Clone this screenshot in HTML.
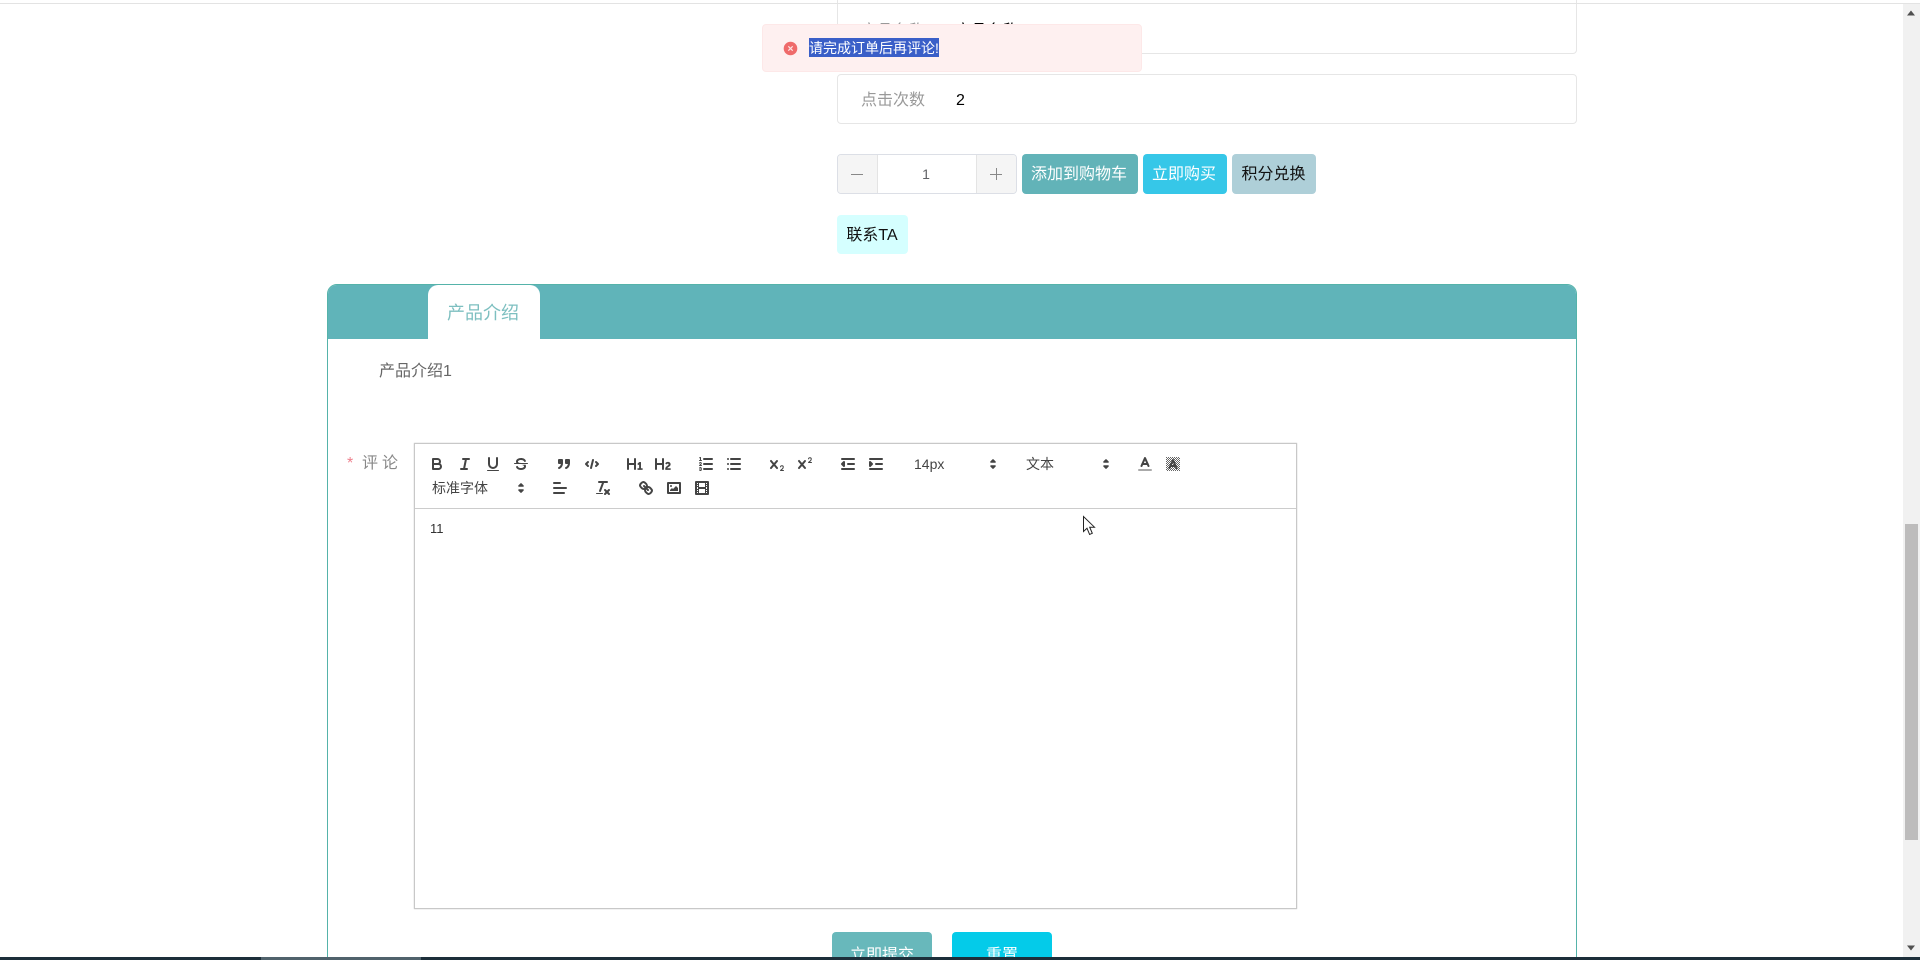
<!DOCTYPE html>
<html lang="zh">
<head>
<meta charset="utf-8">
<title>产品详情</title>
<style>
html,body{margin:0;padding:0;width:1920px;height:960px;overflow:hidden;background:#fff;font-family:"Liberation Sans","Noto Sans CJK SC",sans-serif;}
#w{position:absolute;left:0;top:0;width:1920px;height:960px;overflow:hidden;background:#fff;}
.a{position:absolute;box-sizing:border-box;white-space:nowrap;}
.c{display:flex;align-items:center;justify-content:center;}
svg.i{position:absolute;width:18px;height:18px;fill:none;stroke:#444;stroke-width:2;stroke-linecap:round;stroke-linejoin:round;overflow:visible;}
svg.i .f{fill:#444;stroke:none;}
svg.i .t{stroke-width:1;}
svg.i .b{fill:#444;}
</style>
</head>
<body>
<div id="w">
<!-- top line -->
<div class="a" style="left:0;top:3px;width:1920px;height:1px;background:#e3e3e3;z-index:3"></div>

<!-- description rows -->
<div class="a" style="left:837px;top:-10px;width:740px;height:64px;border:1px solid #e6e6e6;border-radius:4px;"></div>
<div class="a" style="left:861px;top:20px;font-size:16px;line-height:24px;color:#999;">商品名称</div>
<div class="a" style="left:955px;top:20px;font-size:16px;line-height:24px;color:#000;">商品名称1</div>
<div class="a" style="left:837px;top:74px;width:740px;height:50px;border:1px solid #e6e6e6;border-radius:4px;"></div>
<div class="a" style="left:861px;top:89px;font-size:16px;line-height:24px;color:#999;">点击次数</div>
<div class="a" style="left:956px;top:89px;font-size:16px;line-height:24px;color:#000;">2</div>

<!-- message -->
<div class="a" style="left:762px;top:24px;width:380px;height:48px;background:#fef0f0;border:1px solid #fde8e8;border-radius:4px;z-index:5;"></div>
<svg class="a" style="left:783px;top:41px;width:15px;height:15px;z-index:6" viewBox="0 0 15 15"><circle cx="7.5" cy="7.5" r="6.8" fill="#ef6b6b"/><path d="M5.3 5.3l4.4 4.4M9.7 5.3l-4.4 4.4" stroke="#fde2e2" stroke-width="1.2" fill="none"/></svg>
<div class="a" style="left:809px;top:38px;width:130px;height:19px;background:#3a5fc8;color:#fff;font-size:14px;line-height:20px;z-index:6;">请完成订单后再评论!</div>

<!-- stepper -->
<div class="a" style="left:837px;top:154px;width:180px;height:40px;border:1px solid #dcdfe6;border-radius:4px;background:#fff;overflow:hidden;">
  <div class="a" style="left:0;top:0;width:40px;height:38px;background:#f5f5f5;border-right:1px solid #e4e4e4;"></div>
  <div class="a" style="left:138px;top:0;width:40px;height:38px;background:#f5f5f5;border-left:1px solid #e4e4e4;"></div>
  <svg class="a" style="left:13px;top:13px;width:12px;height:12px" viewBox="0 0 12 12"><path d="M0 6.5H12" stroke="#888" stroke-width="1"/></svg>
  <svg class="a" style="left:152px;top:13px;width:12px;height:12px" viewBox="0 0 12 12"><path d="M0 6.5H12M6.5 0V12" stroke="#888" stroke-width="1"/></svg>
  <div class="a c" style="left:39px;top:0;width:98px;height:38px;color:#606266;font-size:14px;">1</div>
</div>
<div class="a c" style="left:1022px;top:154px;width:116px;height:40px;background:#62b3b8;color:#fff;font-size:16px;border-radius:4px;padding:0 2px 4px 0;">添加到购物车</div>
<div class="a c" style="left:1143px;top:154px;width:84px;height:40px;background:#36c7e8;color:#fff;font-size:16px;border-radius:4px;padding:0 2px 4px 0;">立即购买</div>
<div class="a c" style="left:1232px;top:154px;width:84px;height:40px;background:#aecfd8;color:#111;font-size:16px;border-radius:4px;padding:0 1px 4px 0;">积分兑换</div>
<div class="a c" style="left:837px;top:215px;width:71px;height:39px;background:#d5ffff;color:#111;font-size:16px;border-radius:4px;padding:0 1px 4px 0;">联系TA</div>

<!-- tab panel -->
<div class="a" style="left:327px;top:284px;width:1250px;height:700px;border:1px solid #55b3aa;border-radius:10px 10px 0 0;overflow:hidden;">
  <div class="a" style="left:0;top:0;width:1248px;height:54px;background:#60b4b9;"></div>
</div>
<div class="a c" style="left:428px;top:285px;width:112px;height:54px;background:#fff;border-radius:10px 10px 0 0;color:#7dbfc0;font-size:18px;padding-right:2px;">产品介绍</div>
<div class="a" style="left:379px;top:360px;font-size:16px;line-height:24px;color:#666;">产品介绍1</div>

<!-- form label -->
<div class="a" style="left:347px;top:452px;font-size:16px;line-height:24px;color:#ee7f8c;">*</div>
<div class="a" style="left:362px;top:452px;font-size:16px;line-height:24px;color:#888;letter-spacing:4px;">评论</div>

<!-- editor -->
<div class="a" style="left:414px;top:443px;width:883px;height:466px;border:1px solid #c8c8c8;box-shadow:0 0 1px #bbb;"></div>
<div class="a" style="left:415px;top:508px;width:881px;height:1px;background:#ccc;"></div>
<div class="a" style="left:430px;top:520px;font-size:13px;line-height:18px;color:#333;">11</div>

<!-- toolbar row 1 -->
<svg class="i" style="left:428px;top:455px" viewBox="0 0 18 18"><path d="M5,4H9.5A2.5,2.5,0,0,1,12,6.5v0A2.5,2.5,0,0,1,9.5,9H5A0,0,0,0,1,5,9V4A0,0,0,0,1,5,4Z"/><path d="M5,9h5.5A2.5,2.5,0,0,1,13,11.5v0A2.5,2.5,0,0,1,10.5,14H5a0,0,0,0,1,0,0V9A0,0,0,0,1,5,9Z"/></svg>
<svg class="i" style="left:456px;top:455px" viewBox="0 0 18 18"><line x1="7" x2="13" y1="4" y2="4"/><line x1="5" x2="11" y1="14" y2="14"/><line x1="8" x2="10" y1="14" y2="4"/></svg>
<svg class="i" style="left:484px;top:455px" viewBox="0 0 18 18"><path d="M5,3V9a4.012,4.012,0,0,0,4,4H9a4.012,4.012,0,0,0,4-4V3"/><rect class="f" height="1" rx="0.5" ry="0.5" width="12" x="3" y="15"/></svg>
<svg class="i" style="left:512px;top:455px" viewBox="0 0 18 18"><line class="t" x1="15.5" x2="2.5" y1="8.5" y2="8.5"/><path class="f" d="M9.007,8C6.542,7.791,6,7.519,6,6.5,6,5.792,7.283,5,9,5c1.571,0,2.765.679,2.969,1.309a1,1,0,0,0,1.9-.617C13.356,4.106,11.354,3,9,3,6.2,3,4,4.538,4,6.5a3.2,3.2,0,0,0,.5,1.843Z"/><path class="f" d="M8.984,10C11.457,10.208,12,10.479,12,11.5c0,.708-1.283,1.5-3,1.5-1.571,0-2.765-.679-2.969-1.309a1,1,0,1,0-1.9.617C4.644,13.894,6.646,15,9,15c2.8,0,5-1.538,5-3.5a3.2,3.2,0,0,0-.5-1.843Z"/></svg>
<svg class="i" style="left:555px;top:455px" viewBox="0 0 18 18"><rect class="b" height="3" width="3" x="4" y="5"/><rect class="b" height="3" width="3" x="11" y="5"/><path class="b" d="M7,8c0,4.031-3,5-3,5"/><path class="b" d="M14,8c0,4.031-3,5-3,5"/></svg>
<svg class="i" style="left:583px;top:455px" viewBox="0 0 18 18"><polyline points="5 7 3 9 5 11"/><polyline points="13 7 15 9 13 11"/><line x1="10" x2="8" y1="5" y2="13"/></svg>
<svg class="i" style="left:626px;top:455px" viewBox="0 0 18 18"><path class="f" d="M10,4V14a1,1,0,0,1-2,0V10H3v4a1,1,0,0,1-2,0V4A1,1,0,0,1,3,4V8H8V4a1,1,0,0,1,2,0Zm6.06787,9.209H14.98975V7.59863a.54085.54085,0,0,0-.605-.60547h-.62744a1.01119,1.01119,0,0,0-.748.29688L11.645,8.56641a.5435.5435,0,0,0-.022.8584l.28613.30762a.53861.53861,0,0,0,.84717.0332l.09912-.08789a1.2137,1.2137,0,0,0,.2417-.35254h.02246s-.01123.30859-.01123.60547V13.209H12.041a.54085.54085,0,0,0-.605.60547v.43945a.54085.54085,0,0,0,.605.60547h4.02686a.54085.54085,0,0,0,.605-.60547v-.43945A.54085.54085,0,0,0,16.06787,13.209Z"/></svg>
<svg class="i" style="left:654px;top:455px" viewBox="0 0 18 18"><path class="f" d="M16.73975,13.81445v.43945a.54085.54085,0,0,1-.605.60547H11.855a.58392.58392,0,0,1-.64893-.60547V14.0127c0-2.90527,3.39941-3.42187,3.39941-4.55469a.77675.77675,0,0,0-.84717-.78125,1.17684,1.17684,0,0,0-.83594.38477c-.2749.26367-.561.374-.85791.13184l-.4292-.34082c-.30811-.24219-.38525-.51758-.1543-.81445a2.97155,2.97155,0,0,1,2.45361-1.17676,2.45393,2.45393,0,0,1,2.68408,2.40918c0,2.45312-3.1792,2.92676-3.27832,3.93848h2.79443A.54085.54085,0,0,1,16.73975,13.81445ZM9,3A.99974.99974,0,0,0,8,4V8H3V4A1,1,0,0,0,1,4V14a1,1,0,0,0,2,0V10H8v4a1,1,0,0,0,2,0V4A.99974.99974,0,0,0,9,3Z"/></svg>
<svg class="i" style="left:697px;top:455px" viewBox="0 0 18 18"><line x1="7" x2="15" y1="4" y2="4"/><line x1="7" x2="15" y1="9" y2="9"/><line x1="7" x2="15" y1="14" y2="14"/><line class="t" x1="2.5" x2="4.5" y1="5.5" y2="5.5"/><path class="f" d="M3.5,6A0.5,0.5,0,0,1,3,5.5V3.085l-0.276.138A0.5,0.5,0,0,1,2.053,3c-0.124-.247-0.023-0.324.224-0.447l1-.5A0.5,0.5,0,0,1,4,2.5v3A0.5,0.5,0,0,1,3.5,6Z"/><path class="t" d="M4.5,10.5h-2c0-.234,1.85-1.076,1.85-2.234A0.959,0.959,0,0,0,2.5,8.156"/><path class="t" d="M2.5,14.846a0.959,0.959,0,0,0,1.85-.109A0.7,0.7,0,0,0,3.75,14a0.688,0.688,0,0,0,.6-0.736,0.959,0.959,0,0,0-1.85-.109"/></svg>
<svg class="i" style="left:725px;top:455px" viewBox="0 0 18 18"><line x1="6" x2="15" y1="4" y2="4"/><line x1="6" x2="15" y1="9" y2="9"/><line x1="6" x2="15" y1="14" y2="14"/><line x1="3" x2="3" y1="4" y2="4"/><line x1="3" x2="3" y1="9" y2="9"/><line x1="3" x2="3" y1="14" y2="14"/></svg>
<svg class="i" style="left:768px;top:455px" viewBox="0 0 18 18"><path class="f" d="M15.5,15H13.861a3.858,3.858,0,0,0,1.914-2.975,1.8,1.8,0,0,0-1.6-1.751A1.921,1.921,0,0,0,12.021,11.7a0.50013,0.50013,0,1,0,.957.291h0a0.914,0.914,0,0,1,1.053-.725,0.81,0.81,0,0,1,.744.762c0,1.076-1.16971,1.86982-1.93971,2.43082A1.45639,1.45639,0,0,0,12,15.5a0.5,0.5,0,0,0,.5.5h3A0.5,0.5,0,0,0,15.5,15Z"/><path class="f" d="M9.65,5.241a1,1,0,0,0-1.409.108L6,7.964,3.759,5.349A1,1,0,0,0,2.192,6.59178Q2.21541,6.6213,2.241,6.649L4.684,9.5,2.241,12.35A1,1,0,0,0,3.71,13.70722q0.02557-.02768.049-0.05722L6,11.036,8.241,13.65a1,1,0,1,0,1.567-1.24277Q9.78459,12.3777,9.759,12.35L7.316,9.5,9.759,6.651A1,1,0,0,0,9.65,5.241Z"/></svg>
<svg class="i" style="left:796px;top:455px" viewBox="0 0 18 18"><path class="f" d="M15.5,7H13.861a4.015,4.015,0,0,0,1.914-2.975,1.8,1.8,0,0,0-1.6-1.751A1.922,1.922,0,0,0,12.021,3.7a0.5,0.5,0,1,0,.957.291,0.917,0.917,0,0,1,1.053-.725,0.81,0.81,0,0,1,.744.762c0,1.077-1.164,1.925-1.934,2.486A1.423,1.423,0,0,0,12,7.5a0.5,0.5,0,0,0,.5.5h3A0.5,0.5,0,0,0,15.5,7Z"/><path class="f" d="M9.651,5.241a1,1,0,0,0-1.41.108L6,7.964,3.759,5.349a1,1,0,1,0-1.519,1.3L4.683,9.5,2.241,12.35a1,1,0,1,0,1.519,1.3L6,11.036,8.241,13.65a1,1,0,0,0,1.519-1.3L7.317,9.5,9.759,6.651A1,1,0,0,0,9.651,5.241Z"/></svg>
<svg class="i" style="left:839px;top:455px" viewBox="0 0 18 18"><line x1="3" x2="15" y1="14" y2="14"/><line x1="3" x2="15" y1="4" y2="4"/><line x1="9" x2="15" y1="9" y2="9"/><polyline class="b" points="5 7 5 11 3 9 5 7"/></svg>
<svg class="i" style="left:867px;top:455px" viewBox="0 0 18 18"><line x1="3" x2="15" y1="14" y2="14"/><line x1="3" x2="15" y1="4" y2="4"/><line x1="9" x2="15" y1="9" y2="9"/><polyline class="b" points="3 7 3 11 5 9 3 7"/></svg>
<div class="a" style="left:914px;top:455px;font-size:14px;line-height:18px;color:#444;">14px</div>
<svg class="i" style="left:984px;top:455px" viewBox="0 0 18 18"><polygon class="b" style="stroke-width:1.6" points="7 11 9 13 11 11 7 11"/><polygon class="b" style="stroke-width:1.6" points="7 7 9 5 11 7 7 7"/></svg>
<div class="a" style="left:1026px;top:455px;font-size:14px;line-height:18px;color:#444;">文本</div>
<svg class="i" style="left:1097px;top:455px" viewBox="0 0 18 18"><polygon class="b" style="stroke-width:1.6" points="7 11 9 13 11 11 7 11"/><polygon class="b" style="stroke-width:1.6" points="7 7 9 5 11 7 7 7"/></svg>
<svg class="i" style="left:1136px;top:455px" viewBox="0 0 18 18"><line style="stroke:#aaa" x1="3" x2="15" y1="15" y2="15"/><polyline points="5.5 11 9 3 12.5 11"/><line x1="11.63" x2="6.38" y1="9" y2="9"/></svg>
<svg class="i" style="left:1164px;top:455px" viewBox="0 0 18 18"><defs><pattern id="ck" width="2" height="2" patternUnits="userSpaceOnUse"><rect width="1" height="1" fill="#666" stroke="none"/><rect x="1" y="1" width="1" height="1" fill="#666" stroke="none"/></pattern></defs><rect x="2" y="2" width="14" height="14" fill="url(#ck)" stroke="none"/><polyline points="5.5 13 9 5 12.5 13"/><line x1="11.63" x2="6.38" y1="11" y2="11"/></svg>

<!-- toolbar row 2 -->
<div class="a" style="left:432px;top:479px;font-size:14px;line-height:18px;color:#444;">标准字体</div>
<svg class="i" style="left:512px;top:479px" viewBox="0 0 18 18"><polygon class="b" style="stroke-width:1.6" points="7 11 9 13 11 11 7 11"/><polygon class="b" style="stroke-width:1.6" points="7 7 9 5 11 7 7 7"/></svg>
<svg class="i" style="left:551px;top:479px" viewBox="0 0 18 18"><line x1="3" x2="15" y1="9" y2="9"/><line x1="3" x2="13" y1="14" y2="14"/><line x1="3" x2="9" y1="4" y2="4"/></svg>
<svg class="i" style="left:594px;top:479px" viewBox="0 0 18 18"><line x1="5" x2="13" y1="3" y2="3"/><line x1="6" x2="9.35" y1="12" y2="3"/><line x1="11" x2="15" y1="11" y2="15"/><line x1="15" x2="11" y1="11" y2="15"/><rect class="f" height="1" rx="0.5" ry="0.5" width="7" x="2" y="14"/></svg>
<svg class="i" style="left:637px;top:479px" viewBox="0 0 18 18"><line x1="7" x2="11" y1="7" y2="11"/><path d="M8.9,4.577a3.476,3.476,0,0,1,.36,4.679A3.476,3.476,0,0,1,4.577,8.9C3.185,7.5,2.035,6.4,4.217,4.217S7.5,3.185,8.9,4.577Z"/><path d="M13.423,9.1a3.476,3.476,0,0,0-4.679-.36,3.476,3.476,0,0,0,.36,4.679c1.392,1.392,2.5,2.542,4.679.36S14.815,10.5,13.423,9.1Z"/></svg>
<svg class="i" style="left:665px;top:479px" viewBox="0 0 18 18"><rect height="10" width="12" x="3" y="4"/><circle class="f" cx="6" cy="7" r="1"/><polyline class="f" points="5 12 5 11 7 9 8 10 11 7 13 9 13 12 5 12"/></svg>
<svg class="i" style="left:693px;top:479px" viewBox="0 0 18 18"><rect height="12" width="12" x="3" y="3"/><rect class="f" height="12" width="1" x="5" y="3"/><rect class="f" height="12" width="1" x="12" y="3"/><rect class="f" height="2" width="8" x="5" y="8"/><rect class="f" height="1" width="3" x="3" y="5"/><rect class="f" height="1" width="3" x="3" y="7"/><rect class="f" height="1" width="3" x="3" y="10"/><rect class="f" height="1" width="3" x="3" y="12"/><rect class="f" height="1" width="3" x="12" y="5"/><rect class="f" height="1" width="3" x="12" y="7"/><rect class="f" height="1" width="3" x="12" y="10"/><rect class="f" height="1" width="3" x="12" y="12"/></svg>

<!-- mouse cursor -->
<svg class="a" style="left:1082px;top:515px;width:14px;height:22px;z-index:8" viewBox="0 0 14 22"><path d="M1.5 1.5V16.5L5 13.2L7.6 19.5L10.3 18.3L7.7 12.2H12.5Z" fill="#fff" stroke="#222" stroke-width="1" stroke-linejoin="miter"/></svg>

<!-- form buttons -->
<div class="a c" style="left:832px;top:932px;width:100px;height:40px;background:#68b8bb;color:#fff;font-size:16px;border-radius:4px;padding-top:1px;">立即提交</div>
<div class="a c" style="left:952px;top:932px;width:100px;height:40px;background:#04cbe9;color:#fff;font-size:16px;border-radius:4px;padding-top:1px;">重置</div>

<!-- scrollbar -->
<div class="a" style="left:1903px;top:4px;width:17px;height:953px;background:#f1f1f1;z-index:9;"></div>
<div class="a" style="left:1905px;top:524px;width:13px;height:316px;background:#bdbcbc;z-index:10;"></div>
<svg class="a" style="left:1906px;top:9px;width:10px;height:8px;z-index:10" viewBox="0 0 10 8"><path d="M5 1.5L9 6.5H1Z" fill="#505050"/></svg>
<svg class="a" style="left:1906px;top:944px;width:10px;height:8px;z-index:10" viewBox="0 0 10 8"><path d="M1 1.5H9L5 6.5Z" fill="#505050"/></svg>

<!-- bottom bar -->
<div class="a" style="left:0;top:957px;width:1920px;height:3px;background:#1d2f3a;z-index:12;"></div>
<div class="a" style="left:261px;top:957px;width:160px;height:3px;background:#50626c;z-index:13;"></div>
</div>
</body>
</html>
